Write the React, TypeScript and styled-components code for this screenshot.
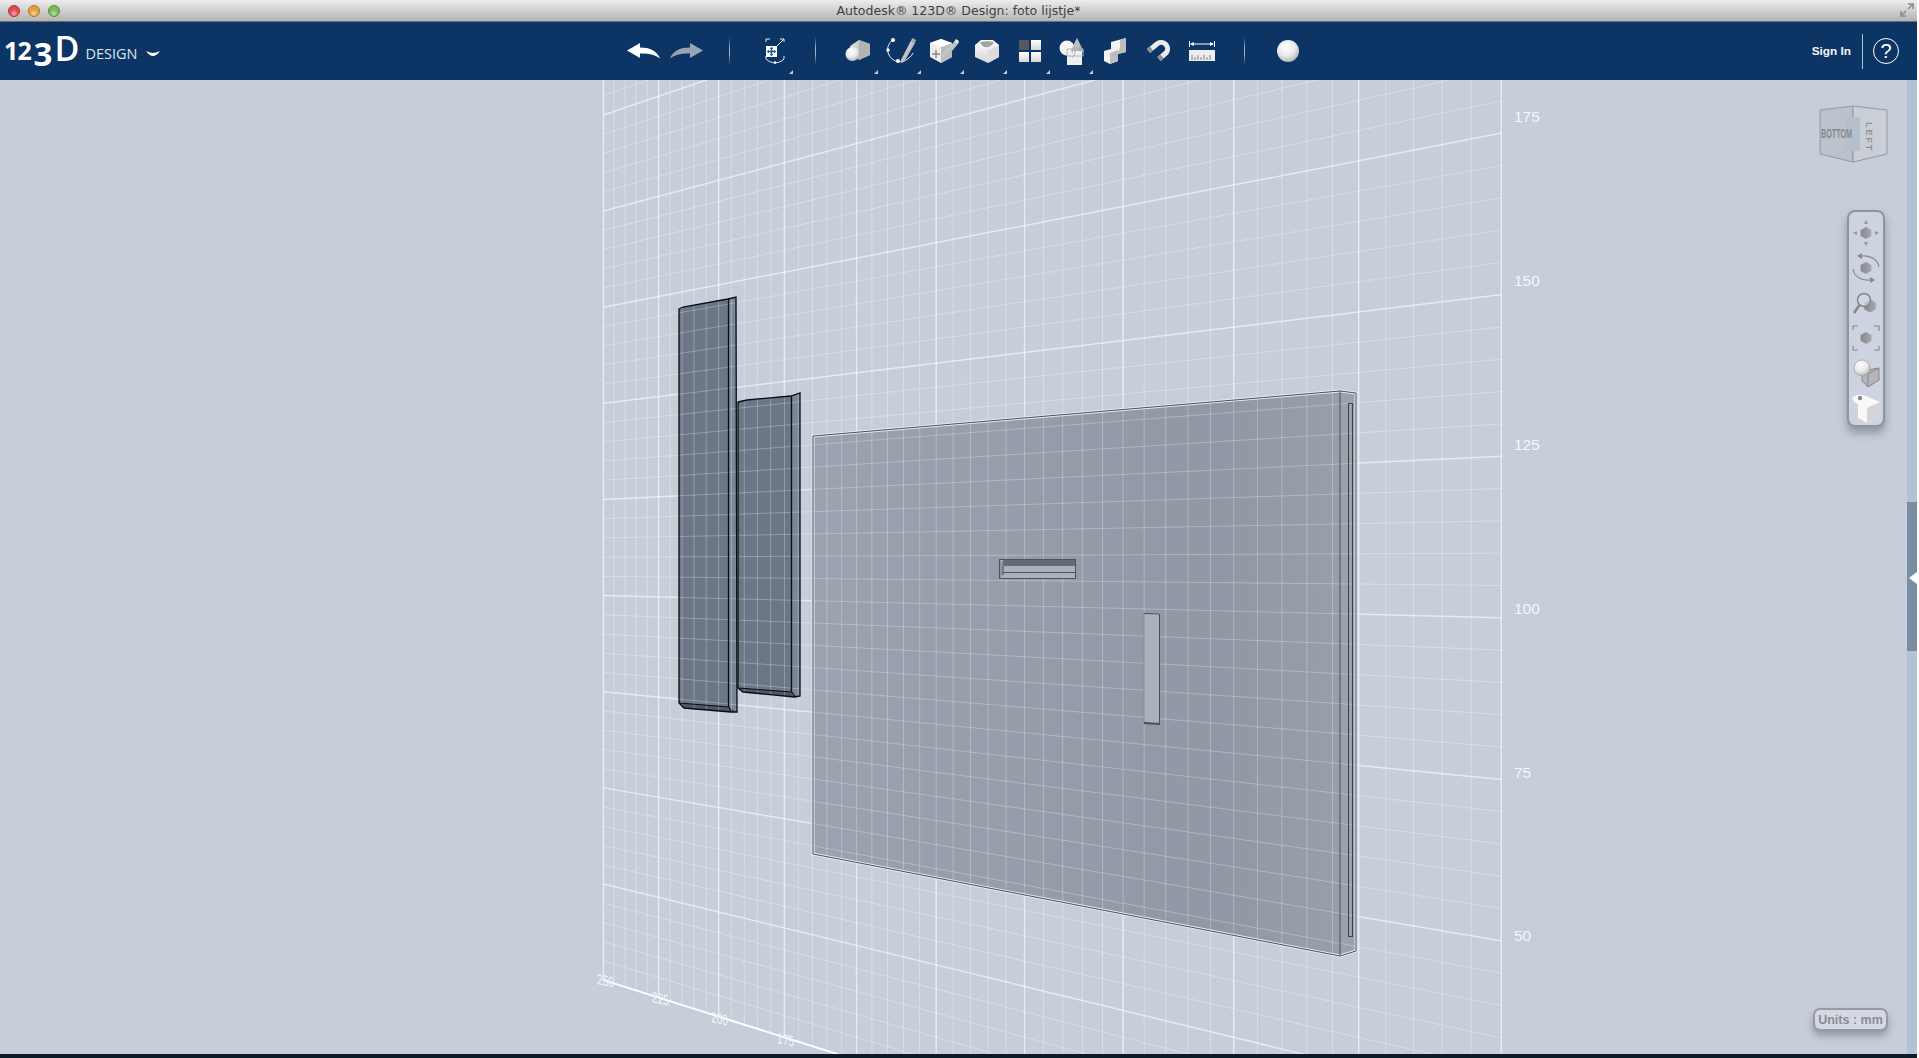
import styled, { createGlobalStyle } from 'styled-components'

const GlobalStyle = createGlobalStyle`
  html, body {
    margin: 0;
    height: 100%;
    background: #fff;
    overflow: hidden;
  }
  #root {
    height: 100%;
  }
`

const Window = styled.div`
  width: 1917px;
  height: 1058px;
  display: flex;
  flex-direction: column;
  font-family: 'Liberation Sans', Arial, sans-serif;
`

const TitleBar = styled.header`
  height: 21px;
  flex: none;
  display: flex;
  align-items: center;
  justify-content: center;
  position: relative;
  background: linear-gradient(#ededed, #d9d9d9 35%, #b4b4b4);
  border-bottom: 1px solid #6d6d6d;
  font-family: 'DejaVu Sans', sans-serif;
  font-size: 12.5px;
  color: #3f3f3f;
`

const Lights = styled.div`
  position: absolute;
  left: 8px;
  top: 5px;
  display: flex;
  gap: 8px;
`

const Light = styled.span<{ $color: string; $edge: string }>`
  width: 12px;
  height: 12px;
  border-radius: 50%;
  box-sizing: border-box;
  border: 1px solid ${p => p.$edge};
  background: radial-gradient(circle at 50% 75%, #fff8 0, transparent 45%),
    ${p => p.$color};
`

const FullScreen = styled.svg`
  position: absolute;
  right: 3px;
  top: 3px;
`

const Toolbar = styled.div`
  height: 58px;
  flex: none;
  display: flex;
  align-items: center;
  background: #0c3566;
  color: #fff;
`

const LogoArea = styled.div`
  width: 622px;
  flex: none;
  display: flex;
  align-items: flex-start;
  height: 100%;
  padding-left: 4px;
  box-sizing: border-box;
`

const LogoMark = styled.div`
  display: flex;
  align-items: flex-start;
  font-family: 'Open Sans', sans-serif;
  font-weight: 700;
  color: #fff;
  line-height: 1;
`

const LogoDigit = styled.span<{ $size: number; $top: number; $width: number }>`
  font-size: ${p => p.$size}px;
  width: ${p => p.$width}px;
  margin-top: ${p => p.$top}px;
`

const LogoD = styled.span`
  font-size: 34px;
  font-weight: 600;
  margin-top: 9px;
`

const LogoWord = styled.span`
  font-family: 'Open Sans', sans-serif;
  font-size: 14.5px;
  color: #dde4ec;
  margin: 25px 0 0 6px;
  line-height: 1;
`

const LogoChevron = styled.svg`
  margin: 28px 0 0 9px;
`

const ToolSlot = styled.button`
  width: 43px;
  height: 58px;
  flex: none;
  padding: 0;
  border: 0;
  background: none;
  position: relative;
  display: flex;
  align-items: center;
  justify-content: center;
`

const MirrorBox = styled.span`
  display: flex;
  transform: scaleX(-1);
`

const Corner = styled.i<{ $right?: number }>`
  position: absolute;
  right: ${p => p.$right ?? 1}px;
  bottom: 6px;
  width: 0;
  height: 0;
  border-style: solid;
  border-width: 0 0 4px 4px;
  border-color: transparent transparent #c7d0da transparent;
`

const Separator = styled.span<{ $before: number; $after: number }>`
  width: 1px;
  height: 28px;
  flex: none;
  margin: 0 ${p => p.$after}px 0 ${p => p.$before}px;
  background: linear-gradient(transparent, #a9b5c3 40%, #a9b5c3 60%, transparent);
`

const AccountArea = styled.div`
  margin-left: auto;
  display: flex;
  align-items: center;
  padding-right: 18px;
`

const SignIn = styled.span`
  font-size: 11.8px;
  font-weight: 700;
  color: #f3f6f9;
  margin-right: 11px;
`

const AccountRule = styled.span`
  width: 1px;
  height: 35px;
  background: #9cc7d9;
  margin-right: 10px;
`

const HelpRing = styled.span`
  width: 26px;
  height: 26px;
  box-sizing: border-box;
  border: 1.5px solid #fff;
  border-radius: 50%;
  display: flex;
  align-items: center;
  justify-content: center;
  font-size: 20px;
  color: #fff;
`

const Workspace = styled.div`
  flex: 1;
  min-height: 0;
  display: flex;
`

const Viewport = styled.main`
  flex: 1;
  position: relative;
  overflow: hidden;
  background: #c5ced9;
`

const Scene = styled.svg`
  position: absolute;
  inset: 0;
  width: 100%;
  height: 100%;
`

const AxisLabel = styled.text`
  font-family: 'Liberation Sans', Arial, sans-serif;
  fill: #f4f7fa;
`

const ViewCube = styled.svg`
  position: absolute;
  left: 1819px;
  top: 25px;
`

const NavBar = styled.nav`
  position: absolute;
  left: 1847px;
  top: 130px;
  width: 38px;
  height: 217px;
  box-sizing: border-box;
  border: 2px solid #8f959d;
  border-radius: 8px;
  background: #cdd3e0;
  box-shadow: 0 6px 8px rgba(70, 80, 95, 0.45);
  display: flex;
  flex-direction: column;
  align-items: center;
  padding-top: 3px;
`

const NavSlot = styled.div`
  width: 32px;
  height: 35px;
  flex: none;
  display: flex;
  align-items: center;
  justify-content: center;
`

const UnitsButton = styled.button`
  position: absolute;
  left: 1813px;
  top: 928px;
  width: 75px;
  height: 23px;
  padding: 0;
  box-sizing: border-box;
  border: 2px solid #989aa1;
  border-radius: 7px;
  background: #d5d9e5;
  box-shadow: 0 5px 7px rgba(70, 80, 95, 0.4);
  font-family: 'Liberation Sans', Arial, sans-serif;
  font-size: 12.5px;
  font-weight: 700;
  color: #8b8b93;
`

const SideStrip = styled.aside`
  width: 10px;
  flex: none;
  display: flex;
  flex-direction: column;
  background: #b3c2d4;
  padding-top: 422px;
  box-sizing: border-box;
`

const SideHandle = styled.div`
  height: 149px;
  position: relative;
  background: #7a8ea3;
`

const HandleArrow = styled.i`
  position: absolute;
  left: 2px;
  top: 70px;
  width: 0;
  height: 0;
  border-style: solid;
  border-width: 6px 8px 6px 0;
  border-color: transparent #fff transparent transparent;
`

const BottomEdge = styled.div`
  height: 4px;
  flex: none;
  background: #0d1b26;
`

const HiddenDefs = styled.svg`
  position: absolute;
  width: 0;
  height: 0;
`

// wall perspective, taken from the reference
const VP = { x: -716, y: 563 }
const WALL_LEFT = 603.5
const WALL_RIGHT = 1502
const wallX = (n: number) => -683 + 31300 / (24.33 - n)
const wallY = (yAtRight: number, x: number) =>
  VP.y + ((yAtRight - VP.y) * (x - VP.x)) / (WALL_RIGHT - VP.x)
const FLOOR_RIGHT = 133 + 161.6 * 7

const TALL_PANEL = '679,309 683,307 728,299 736,297 737,712 731,712 684,708 679,703'
const SHORT_PANEL = '738,402 747,400 791,396 800,393 800,696 795,697 743,692 738,688'
const BIG_PANEL = '813,436 1340,391 1356,393 1356,951 1340,956 813,854'

function GridLines({ flat }: { flat?: boolean }) {
  const verticals = Array.from({ length: 51 }, (_, i) => i)
  const horizontals = Array.from({ length: 76 }, (_, i) => i - 40)
  const minor = flat ? 0.27 : 0.32
  const major = flat ? 0.27 : 0.58
  return (
    <g>
      {verticals.map(i => {
        const x = wallX(i / 5)
        const isMajor = i % 5 === 0
        return (
          <line
            key={`v${i}`}
            x1={x}
            y1={0}
            x2={x}
            y2={wallY(FLOOR_RIGHT, x)}
            stroke="#fff"
            strokeOpacity={isMajor ? major : minor}
            strokeWidth={isMajor && !flat ? 1.5 : 1}
          />
        )
      })}
      {horizontals.map(i => {
        const right = 133 + 32.32 * i
        const isMajor = i % 5 === 0
        const edge = i === 35
        return (
          <line
            key={`h${i}`}
            x1={WALL_LEFT}
            y1={wallY(right, WALL_LEFT)}
            x2={WALL_RIGHT}
            y2={right}
            stroke="#fff"
            strokeOpacity={edge ? 0.95 : isMajor ? major : minor}
            strokeWidth={edge ? 2 : isMajor && !flat ? 1.5 : 1}
          />
        )
      })}
    </g>
  )
}

function PanelFills() {
  return (
    <g>
      <polygon points={TALL_PANEL} fill="#6b7786" />
      <polygon points="728,299 736,297 737,712 729,707" fill="#7b8795" />
      <polygon points="679,703 729,707 736,712 731,712 684,708" fill="#4f5863" />
      <polygon points={SHORT_PANEL} fill="#6b7786" />
      <polygon points="791,396 800,393 800,696 792,692" fill="#7b8795" />
      <polygon points="738,688 792,692 796,697 743,692" fill="#4f5863" />
      <polygon points={BIG_PANEL} fill="url(#bigFace)" />
      <polygon points="1340,391 1356,393 1356,951 1340,956" fill="#9aa2ad" />
    </g>
  )
}

function PanelDetails() {
  return (
    <g fill="none" strokeLinejoin="miter">
      <polygon points="999,560 1076,559 1076,579 999,579" fill="#a9b3bf" />
      <polygon points="1003,560 1076,559 1076,566 1003,566" fill="#666c75" />
      <polygon points="999,560 1003,562 1003,575 999,579" fill="#8e97a2" />
      <rect x="1144" y="613" width="16" height="111" fill="#a9b3bf" />
      <polygon points={BIG_PANEL} stroke="#e6eaee" strokeWidth="3" />
      <polygon points={BIG_PANEL} stroke="#4a5058" strokeWidth="1" />
      <line x1="1340" y1="391" x2="1340" y2="956" stroke="#4a5058" strokeWidth="1" />
      <rect x="1348.5" y="403.5" width="4" height="533" stroke="#3d434a" strokeWidth="1" />
      <g stroke="#0a0c0f" strokeWidth="1.3">
        <polygon points={TALL_PANEL} />
        <line x1="728.5" y1="299" x2="728.5" y2="707" />
        <polyline points="679,703 729,707 731,712" strokeWidth="1" />
        <polygon points={SHORT_PANEL} />
        <line x1="791.5" y1="396" x2="791.5" y2="692" />
        <polyline points="738,688 792,692 795,697" strokeWidth="1" />
      </g>
      <g stroke="#4e535a" strokeWidth="1">
        <rect x="999.5" y="559.5" width="76" height="19" />
        <line x1="1003" y1="572.5" x2="1076" y2="572.5" />
        <line x1="1003" y1="566" x2="1003" y2="575" />
      </g>
      <g stroke="#4b5057">
        <polyline points="1144,613.5 1159.5,614 1159.5,724" />
        <line x1="1144" y1="723" x2="1160" y2="724" strokeWidth="2" />
        <line x1="1144" y1="613" x2="1144" y2="724" strokeOpacity=".35" />
      </g>
    </g>
  )
}

const wallLabels = [
  { text: '175', y: 122 },
  { text: '150', y: 286 },
  { text: '125', y: 450 },
  { text: '100', y: 614 },
  { text: '75', y: 778 },
  { text: '50', y: 941 },
]

const floorLabels = [
  { text: '250', x: 597, y: 984 },
  { text: '225', x: 652, y: 1002 },
  { text: '200', x: 711, y: 1022 },
  { text: '175', x: 777, y: 1043 },
]

function Grid3D() {
  return (
    <Scene viewBox="0 80 1907 974" preserveAspectRatio="none">
      <defs>
        <clipPath id="panelArea">
          <polygon points={TALL_PANEL} />
          <polygon points={SHORT_PANEL} />
          <polygon points={BIG_PANEL} />
        </clipPath>
      </defs>
      <GridLines />
      <PanelFills />
      <g clipPath="url(#panelArea)">
        <GridLines flat />
      </g>
      <PanelDetails />
      {wallLabels.map(l => (
        <AxisLabel key={l.text} x="1514" y={l.y} fontSize="15.5">
          {l.text}
        </AxisLabel>
      ))}
      {floorLabels.map(l => (
        <AxisLabel
          key={l.text}
          fontSize="15"
          transform={`translate(${l.x} ${l.y}) skewY(13) scale(0.68 1)`}
        >
          {l.text}
        </AxisLabel>
      ))}
    </Scene>
  )
}

const SharedDefs = () => (
  <HiddenDefs aria-hidden="true">
    <defs>
      <linearGradient id="bigFace" x1="0" x2="1" y1="0" y2="0">
        <stop offset="0" stopColor="#9aa3af" />
        <stop offset="0.75" stopColor="#8f98a4" />
        <stop offset="1" stopColor="#98a0ab" />
      </linearGradient>
      <linearGradient id="iconWhite" x1="0" x2="0" y1="0" y2="1">
        <stop offset="0" stopColor="#fff" />
        <stop offset="1" stopColor="#d5d5d5" />
      </linearGradient>
      <linearGradient id="iconSide" x1="0" x2="1" y1="0" y2="1">
        <stop offset="0" stopColor="#e8e8e8" />
        <stop offset="1" stopColor="#9a9a9a" />
      </linearGradient>
      <radialGradient id="ball" cx="0.42" cy="0.32" r="0.75">
        <stop offset="0" stopColor="#fff" />
        <stop offset="0.55" stopColor="#e9e9e9" />
        <stop offset="1" stopColor="#a8a8a8" />
      </radialGradient>
      <linearGradient id="navHex" x1="0" x2="1" y1="0" y2="0">
        <stop offset="0" stopColor="#85878b" />
        <stop offset="1" stopColor="#a5a8ad" />
      </linearGradient>
    </defs>
  </HiddenDefs>
)

const UndoIcon = ({ fill }: { fill: string }) => (
  <svg width="33" height="16" viewBox="0 0 33 16">
    <path d="M0 7.5 13 0v4.5c9 0 17 3 20 11-5-4-12-5.500-20-5v4.500z" fill={fill} />
  </svg>
)

const FitIcon = () => (
  <svg width="20" height="26" viewBox="0 0 20 26">
    <g fill="none" stroke="#e8edf2" strokeWidth="1">
      <path d="M1 4V1h4M15 1h4v3M1 18v3M19 18v3" />
      <path d="M1 21c3 3 6 3.500 9 4 3-.500 6-1 9-4" />
    </g>
    <rect x="1" y="8" width="11" height="11" fill="#fff" />
    <path d="M12 8 19 1" stroke="#e8edf2" />
    <path d="M6.500 9.500v8M2.500 13.500h8" stroke="#23558c" strokeWidth="1.500" />
    <path d="M6.500 9 4.800 11h3.400zM6.500 18l-1.700-2h3.400zM2 13.500 4 11.800v3.400zM11 13.500 9 11.800v3.400z" fill="#23558c" />
    <circle cx="10" cy="24.500" r="1.200" fill="#fff" />
  </svg>
)

const PrimitivesIcon = () => (
  <svg width="26" height="22" viewBox="0 0 26 22">
    <path d="M5 6 14 0l11 4v11l-11 5-8-5z" fill="url(#iconSide)" />
    <path d="M14 0v20l11-5V4z" fill="#b3b3b3" />
    <circle cx="7.500" cy="14" r="7" fill="url(#ball)" />
  </svg>
)

const SketchIcon = () => (
  <svg width="30" height="28" viewBox="0 0 30 28">
    <path d="M7 3C2 6 0 13 3 18c3 6 10 8 15 6 4-2 7-4 9-8" fill="none" stroke="#e8edf2" strokeWidth="1" />
    <circle cx="7" cy="3" r="2" fill="#fff" />
    <circle cx="2" cy="13" r="1.700" fill="#fff" />
    <circle cx="12" cy="24" r="2" fill="#fff" />
    <path d="M15 23 25 3.500l4 2.500L18 25l-3 1z" fill="url(#iconSide)" />
    <path d="M25 3.500 26.500 1l3.500 2-1 3z" fill="#aaa" />
  </svg>
)

const ConstructIcon = () => (
  <svg width="30" height="28" viewBox="0 0 30 28">
    <path d="M1 6 12 2l11 4v14l-11 6-11-6z" fill="#eee" />
    <path d="M12 10v16l11-6V6z" fill="#bcbcbc" />
    <path d="M1 6 12 10l11-4-11-4z" fill="#fff" />
    <path d="M3 17h8M7 13v8" stroke="#8a8a8a" strokeWidth="1.500" />
    <path d="M13 18 25 5l4 2-11 13-5 2z" fill="url(#iconSide)" />
    <path d="M25 5l2-3 3 2-1 3z" fill="#eee" />
  </svg>
)

const ModifyIcon = () => (
  <svg width="24" height="24" viewBox="0 0 24 24">
    <path d="M0 6 6 1h12l6 5v12l-11 6L0 18z" fill="url(#iconWhite)" />
    <path d="M13 24V12l11-6v12z" fill="#dcdcdc" />
    <path d="M5 3c2 7 11 7 14 0-4-1-10-1-14 0z" fill="#a3a3a3" />
  </svg>
)

const PatternIcon = () => (
  <svg width="22" height="22" viewBox="0 0 22 22">
    <rect width="10" height="10" fill="#55585d" />
    <rect x="12" width="10" height="10" fill="url(#iconWhite)" />
    <rect y="12" width="10" height="10" fill="url(#iconWhite)" />
    <rect x="12" y="12" width="10" height="10" fill="url(#iconWhite)" />
  </svg>
)

const GroupingIcon = () => (
  <svg width="27" height="27" viewBox="0 0 27 27">
    <circle cx="8" cy="10" r="7.500" fill="#f6f6f6" />
    <path d="M18 0l7 14H11z" fill="url(#iconSide)" />
    <rect x="8" y="13" width="15" height="14" fill="#f0f0f0" />
    <path d="M8 11h16v7H8z" fill="none" stroke="#b0b0b0" />
    <path d="M18 3l-5 12M13 10c4 2 4 6 0 10" fill="none" stroke="#b0b0b0" />
  </svg>
)

const CombineIcon = () => (
  <svg width="23" height="26" viewBox="0 0 23 26">
    <path d="M0 13 7 11V4l15-4v14l-8 2v7l-8 3-6-3z" fill="#f3f3f3" />
    <path d="M14 16 22 14V0l-6 2v8l-2 4zM6 26V15l8-3v11z" fill="#bdbdbd" />
  </svg>
)

const SnapIcon = () => (
  <svg width="26" height="24" viewBox="0 0 26 24">
    <path d="M2.500 12 11.500 4.500A6.500 6.500 0 0 1 20.500 13.500L13 20" fill="none" stroke="#ececec" strokeWidth="5" />
    <path d="M2.500 12 5.500 9.500M16 17.400 13 20" fill="none" stroke="#8d8d8d" strokeWidth="5" />
  </svg>
)

const MeasureIcon = () => (
  <svg width="26" height="20" viewBox="0 0 26 20">
    <path d="M.5 0v6M25.500 0v6M2 3h22" stroke="#fff" />
    <path d="M1 3l4-2v4zM25 3l-4-2v4z" fill="#fff" />
    <rect y="9" width="26" height="11" fill="#ededed" />
    <path d="M3 14v5M6 16v3M9 14v5M12 16v3M15 14v5M18 16v3M21 14v5" stroke="#7b8188" />
  </svg>
)

const SphereIcon = () => (
  <svg width="22" height="22" viewBox="0 0 22 22">
    <circle cx="11" cy="11" r="11" fill="url(#ball)" />
  </svg>
)

const NavHex = ({ x, y, r }: { x: number; y: number; r: number }) => (
  <path
    d={`M${x} ${y - r}l${r * 0.9} ${r / 2}v${r}l${-r * 0.9} ${r / 2}l${-r * 0.9} ${-r / 2}v${-r}z`}
    fill="url(#navHex)"
  />
)

const PanIcon = () => (
  <svg width="28" height="28" viewBox="0 0 28 28">
    <NavHex x={14} y={14} r={6} />
    <path d="M14 1l-2 4h4zM14 27l-2-4h4zM1 14l4-2v4zM27 14l-4-2v4z" fill="#94979c" />
  </svg>
)

const OrbitIcon = () => (
  <svg width="28" height="30" viewBox="0 0 28 30">
    <NavHex x={14} y={15} r={6} />
    <g fill="none" stroke="#87898e" strokeWidth="1.100">
      <path d="M27 14C26 7 19 2 10 3" />
      <path d="M1 16c1 7 8 12 17 11" />
    </g>
    <path d="M10 0 5 3l5 3zM18 24l5 3-5 3z" fill="#87898e" />
  </svg>
)

const ZoomIcon = () => (
  <svg width="26" height="26" viewBox="0 0 26 26">
    <NavHex x={17} y={16} r={6.500} />
    <circle cx="11" cy="10" r="6.500" fill="#d6dbe5" fillOpacity="0.7" stroke="#85878b" strokeWidth="1.500" />
    <path d="M6.500 15 1 23" stroke="#85878b" strokeWidth="2.500" />
  </svg>
)

const NavFitIcon = () => (
  <svg width="28" height="26" viewBox="0 0 28 26">
    <NavHex x={14} y={13} r={6} />
    <path d="M1 5V1h5M22 1h5v5M1 21v4h5M22 25h5v-4" fill="none" stroke="#85878b" strokeWidth="1.100" />
  </svg>
)

const MaterialIcon = () => (
  <svg width="28" height="28" viewBox="0 0 28 28">
    <path d="M10 12 27 9v12l-11 7-6-6z" fill="#b3b6ba" stroke="#85878b" />
    <path d="M16 15v13M16 15l11-6" stroke="#85878b" />
    <circle cx="10" cy="9" r="8" fill="url(#ball)" stroke="#9a9da2" strokeWidth="0.700" />
  </svg>
)

const HomeViewIcon = () => (
  <svg width="28" height="30" viewBox="0 0 28 30">
    <path d="M0 5c5-4 10-4 14-2l14 6v14l-13 7-9-5V11C3 10 1 8 0 5z" fill="#f8f8f8" />
    <path d="M15 15v15l13-7V9z" fill="#d5d5d5" />
    <circle cx="8" cy="5" r="2.200" fill="#8b8b8b" />
  </svg>
)

const CubeGlyph = () => (
  <ViewCube width="70" height="58" viewBox="0 0 70 58">
    <path d="M1 5 34 1v56L1 49z" fill="#bcc2cb" stroke="#9599a0" />
    <path d="M34 1 68 5v44l-34 8z" fill="#c9ced7" stroke="#9599a0" />
    <rect x="27" y="12" width="14" height="34" fill="#b5c0ce" />
    <text
      x="2"
      y="33"
      fontSize="13"
      fontWeight="700"
      fontFamily="'Liberation Sans', sans-serif"
      fill="#85888e"
      textLength="31"
      lengthAdjust="spacingAndGlyphs"
    >
      BOTTOM
    </text>
    <text
      fontSize="9.500"
      fontWeight="700"
      fontFamily="'Liberation Sans', sans-serif"
      fill="#8f9298"
      transform="translate(47 17) rotate(90)"
      letterSpacing="1.500"
    >
      LEFT
    </text>
  </ViewCube>
)

const tools = [
  { key: 'primitives', icon: <PrimitivesIcon />, menu: true },
  { key: 'sketch', icon: <SketchIcon />, menu: true },
  { key: 'construct', icon: <ConstructIcon />, menu: true },
  { key: 'modify', icon: <ModifyIcon />, menu: true },
  { key: 'pattern', icon: <PatternIcon />, menu: true },
  { key: 'grouping', icon: <GroupingIcon />, menu: true },
  { key: 'combine', icon: <CombineIcon />, menu: false },
  { key: 'snap', icon: <SnapIcon />, menu: false },
  { key: 'measure', icon: <MeasureIcon />, menu: false },
]

const navIcons = [
  { key: 'pan', icon: <PanIcon /> },
  { key: 'orbit', icon: <OrbitIcon /> },
  { key: 'zoom', icon: <ZoomIcon /> },
  { key: 'fit', icon: <NavFitIcon /> },
  { key: 'material', icon: <MaterialIcon /> },
  { key: 'home', icon: <HomeViewIcon /> },
]

export default function App() {
  return (
    <Window>
      <GlobalStyle />
      <SharedDefs />
      <TitleBar>
        <Lights>
          <Light $color="#e4494f" $edge="#a53a3e" />
          <Light $color="#e6a03a" $edge="#a9782f" />
          <Light $color="#79b958" $edge="#5b8c43" />
        </Lights>
        Autodesk® 123D® Design: foto lijstje*
        <FullScreen width="14" height="14" viewBox="0 0 14 14">
          <path d="M1 13l5-5M13 1 8 6M1 8v5h5M8 1h5v5" fill="none" stroke="#8b8b8b" strokeWidth="1.600" />
        </FullScreen>
      </TitleBar>
      <Toolbar>
        <LogoArea>
          <LogoMark>
            <LogoDigit $size={25} $top={16} $width={13.5}>1</LogoDigit>
            <LogoDigit $size={25} $top={16} $width={16}>2</LogoDigit>
            <LogoDigit $size={33} $top={15} $width={21}>3</LogoDigit>
            <LogoD>D</LogoD>
          </LogoMark>
          <LogoWord>DESIGN</LogoWord>
          <LogoChevron width="14" height="7" viewBox="0 0 14 7">
            <path d="M0 1c3 1 5 2 7 2s4-1 7-2c-2 3-5 5-7 5S2 4 0 1z" fill="#fff" />
          </LogoChevron>
        </LogoArea>
        <ToolSlot>
          <UndoIcon fill="#fff" />
        </ToolSlot>
        <ToolSlot>
          <MirrorBox>
            <UndoIcon fill="#98a4b3" />
          </MirrorBox>
        </ToolSlot>
        <Separator $before={21} $after={23} />
        <ToolSlot>
          <FitIcon />
          <Corner $right={3} />
        </ToolSlot>
        <Separator $before={19} $after={20} />
        {tools.map(t => (
          <ToolSlot key={t.key}>
            {t.icon}
            {t.menu && <Corner />}
          </ToolSlot>
        ))}
        <Separator $before={21} $after={21} />
        <ToolSlot>
          <SphereIcon />
        </ToolSlot>
        <AccountArea>
          <SignIn>Sign In</SignIn>
          <AccountRule />
          <HelpRing>?</HelpRing>
        </AccountArea>
      </Toolbar>
      <Workspace>
        <Viewport>
          <Grid3D />
          <CubeGlyph />
          <NavBar>
            {navIcons.map(n => (
              <NavSlot key={n.key}>{n.icon}</NavSlot>
            ))}
          </NavBar>
          <UnitsButton>Units : mm</UnitsButton>
        </Viewport>
        <SideStrip>
          <SideHandle>
            <HandleArrow />
          </SideHandle>
        </SideStrip>
      </Workspace>
      <BottomEdge />
    </Window>
  )
}
